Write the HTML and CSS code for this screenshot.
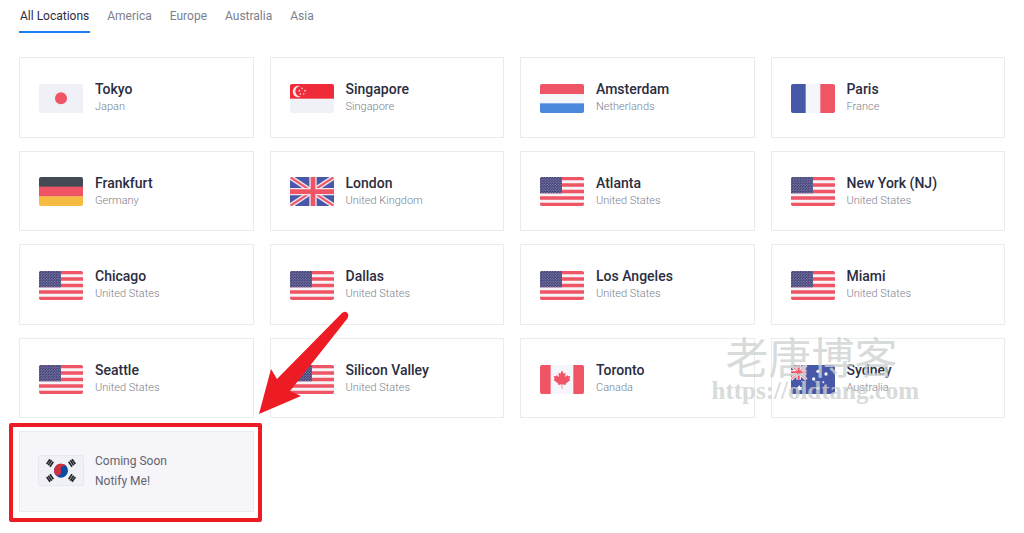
FILE: index.html
```html
<!DOCTYPE html>
<html lang="en">
<head>
    <meta charset="utf-8">
    <title>Server Locations</title>
    <link rel="stylesheet" href="styles.css">
</head>
<body>
    <!-- Flag shapes -->
    <svg class="sprite" aria-hidden="true">
        <symbol id="jp" viewBox="0 0 132 87">
            <rect width="132" height="87" fill="#f0f1f6"/>
            <circle cx="66" cy="43" r="18" fill="#ef5565"/>
        </symbol>
        <symbol id="sg" viewBox="0 0 132 87">
            <rect width="132" height="87" fill="#f0f1f6"/>
            <rect width="132" height="44" fill="#ef2b3a"/>
            <path d="M29 6a17 17 0 1 0 3 32a16 16 0 0 1 0-32z" fill="#fbe4e8"/>
            <g fill="#fbe4e8">
                <circle cx="36" cy="13" r="2.5"/><circle cx="28" cy="20" r="2.5"/><circle cx="45" cy="20" r="2.5"/>
                <circle cx="31" cy="30" r="2.5"/><circle cx="41" cy="30" r="2.5"/>
            </g>
        </symbol>
        <symbol id="nl" viewBox="0 0 132 87">
            <rect width="132" height="87" fill="#f5f6fb"/>
            <rect width="132" height="30" fill="#ef5565"/>
            <rect y="58" width="132" height="29" fill="#4a89dc"/>
        </symbol>
        <symbol id="fr" viewBox="0 0 132 87">
            <rect width="132" height="87" fill="#f5f6fb"/>
            <rect width="44" height="87" fill="#4758a9"/>
            <rect x="88" width="44" height="87" fill="#ef5565"/>
        </symbol>
        <symbol id="de" viewBox="0 0 132 87">
            <rect width="132" height="30" fill="#434a54"/>
            <rect y="29" width="132" height="30" fill="#ef5565"/>
            <rect y="58" width="132" height="29" fill="#f6bb42"/>
        </symbol>
        <symbol id="gb" viewBox="0 0 132 87">
            <rect width="132" height="87" fill="#4758a9"/>
            <path d="M0 0L132 87M132 0L0 87" stroke="#f0dfe8" stroke-width="15"/>
            <path d="M0 0L132 87M132 0L0 87" stroke="#ef5565" stroke-width="6"/>
            <path d="M69 0V87M0 44H132" stroke="#f5e6ec" stroke-width="22"/>
            <path d="M69 0V87M0 44H132" stroke="#ef5565" stroke-width="14"/>
        </symbol>
        <symbol id="us" viewBox="0 0 132 87">
            <pattern id="stars" width="8" height="8" patternUnits="userSpaceOnUse">
                <rect width="8" height="8" fill="#3d3c76"/>
                <circle cx="2" cy="2" r="1.5" fill="#d5d5e6"/>
                <circle cx="6" cy="6" r="1.5" fill="#d5d5e6"/>
            </pattern>
            <rect width="132" height="87" fill="#f7f3f7"/>
            <path d="M0 5H132M0 24H132M0 43.500H132M0 63H132M0 82H132" stroke="#ef5565" stroke-width="10"/>
            <rect width="66" height="49" fill="url(#stars)"/>
        </symbol>
        <symbol id="ca" viewBox="0 0 132 87">
            <rect width="132" height="87" fill="#f5f6fb"/>
            <rect width="32" height="87" fill="#ef5565"/>
            <rect x="100" width="32" height="87" fill="#ef5565"/>
            <path d="M66 16L71 26L77 23L75 37L82 30L84 34L91 33L88 42L91 45L77 56L78 60L67 58V72H65V58L54 60L55 56L41 45L44 42L41 33L48 34L50 30L57 37L55 23L61 26Z" fill="#ef5565"/>
        </symbol>
        <symbol id="au" viewBox="0 0 132 87">
            <rect width="132" height="87" fill="#4758a9"/>
            <path d="M0 0L46 44M46 0L0 44" stroke="#f5e6ec" stroke-width="10"/>
            <path d="M23 0V44M0 22H46" stroke="#f5e6ec" stroke-width="14"/>
            <path d="M0 0L46 44M46 0L0 44" stroke="#ef5565" stroke-width="3"/>
            <path d="M23 0V44M0 22H46" stroke="#ef5565" stroke-width="6"/>
            <g fill="#f5f6fb">
                <path d="M25 60L28 66L35 65L31 70L34 76L27 74L22 79L21 72L15 69L21 66Z"/>
                <circle cx="81" cy="19" r="5"/><circle cx="105" cy="27" r="5"/>
                <circle cx="68" cy="42" r="5"/><circle cx="97" cy="52" r="3"/><circle cx="81" cy="70" r="5"/>
            </g>
        </symbol>
        <symbol id="kr" viewBox="0 0 132 87">
            <rect width="132" height="87" fill="#f0f1f6"/>
            <g transform="rotate(-20 66 44)">
                <circle cx="66" cy="44" r="21" fill="#0a4aa3"/>
                <path d="M45 44a21 21 0 0 1 42 0a10.500 10.500 0 0 0-21 0a10.500 10.500 0 0 1-21 0z" fill="#cf2f3f"/>
            </g>
            <g stroke="#26262b" stroke-width="5">
                <path d="M28 28L38 13M33 32L43 17M23 24L33 10"/>
                <path d="M104 28L94 13M99 32L89 17M109 24L99 10"/>
                <path d="M28 59L38 74M33 55L43 70M23 63L33 77"/>
                <path d="M104 59L94 74M99 55L89 70M109 63L99 77"/>
            </g>
        </symbol>
    </svg>

    <div class="page">
        <nav class="tabs">
            <button type="button" class="tab active">All Locations</button>
            <button type="button" class="tab">America</button>
            <button type="button" class="tab">Europe</button>
            <button type="button" class="tab">Australia</button>
            <button type="button" class="tab">Asia</button>
        </nav>

        <div class="locations">
            <div class="card"><svg class="flag"><use href="#jp"/></svg><div><div class="city">Tokyo</div><div class="country">Japan</div></div></div>
            <div class="card"><svg class="flag"><use href="#sg"/></svg><div><div class="city">Singapore</div><div class="country">Singapore</div></div></div>
            <div class="card"><svg class="flag"><use href="#nl"/></svg><div><div class="city">Amsterdam</div><div class="country">Netherlands</div></div></div>
            <div class="card"><svg class="flag"><use href="#fr"/></svg><div><div class="city">Paris</div><div class="country">France</div></div></div>

            <div class="card"><svg class="flag"><use href="#de"/></svg><div><div class="city">Frankfurt</div><div class="country">Germany</div></div></div>
            <div class="card"><svg class="flag"><use href="#gb"/></svg><div><div class="city">London</div><div class="country">United Kingdom</div></div></div>
            <div class="card"><svg class="flag"><use href="#us"/></svg><div><div class="city">Atlanta</div><div class="country">United States</div></div></div>
            <div class="card"><svg class="flag"><use href="#us"/></svg><div><div class="city">New York (NJ)</div><div class="country">United States</div></div></div>

            <div class="card"><svg class="flag"><use href="#us"/></svg><div><div class="city">Chicago</div><div class="country">United States</div></div></div>
            <div class="card"><svg class="flag"><use href="#us"/></svg><div><div class="city">Dallas</div><div class="country">United States</div></div></div>
            <div class="card"><svg class="flag"><use href="#us"/></svg><div><div class="city">Los Angeles</div><div class="country">United States</div></div></div>
            <div class="card"><svg class="flag"><use href="#us"/></svg><div><div class="city">Miami</div><div class="country">United States</div></div></div>

            <div class="card"><svg class="flag"><use href="#us"/></svg><div><div class="city">Seattle</div><div class="country">United States</div></div></div>
            <div class="card"><svg class="flag"><use href="#us"/></svg><div><div class="city">Silicon Valley</div><div class="country">United States</div></div></div>
            <div class="card"><svg class="flag"><use href="#ca"/></svg><div><div class="city">Toronto</div><div class="country">Canada</div></div></div>
            <div class="card">
                <svg class="flag"><use href="#au"/></svg><div><div class="city">Sydney</div><div class="country">Australia</div></div>
                <div class="watermark">
                    <div class="watermark-name">老唐博客</div>
                    <div class="watermark-url">https://oldtang.com</div>
                </div>
            </div>

            <div class="card soon">
                <svg class="flag"><use href="#kr"/></svg>
                <div class="notify">Coming Soon<br><a href="#">Notify Me!</a></div>
                <svg class="arrow" viewBox="0 0 92 104" aria-hidden="true">
                    <path d="M1 103L13 58L19 68L84 2Q88-1 90 3Q91 5 89 8L32 80L43 85Z" fill="#ed1c24"/>
                </svg>
            </div>
        </div>
    </div>
</body>
</html>
```
FILE: styles.css
```css
* {
    box-sizing: border-box;
}

body {
    margin: 0;
    font-family: Roboto, Arial, sans-serif;
    background-color: #fff;
    color: #2b2d42;
}

.sprite {
    position: absolute;
    width: 0;
    height: 0;
}

.page {
    padding: 0 19px 21px;
}

.tabs {
    display: flex;
    gap: 16px;
    margin-bottom: 24px;
}

.tab {
    padding: 8px 1px 7px;
    border: none;
    border-bottom: 2px solid transparent;
    background: none;
    font-family: inherit;
    font-size: 12px;
    line-height: 16px;
    color: #7d808c;
    cursor: pointer;
}

.tab.active {
    color: #2b2d42;
    border-bottom-color: #1a7df0;
}

.locations {
    display: grid;
    grid-template-columns: repeat(4, 1fr);
    grid-auto-rows: 1fr;
    gap: 13px 16px;
    min-height: 455px;
}

.card {
    position: relative;
    display: flex;
    align-items: center;
    gap: 12px;
    padding: 20px 19px 18px;
    border: 1px solid #ebebee;
}

.flag {
    flex: none;
    width: 44px;
    height: 29px;
    border-radius: 2px;
}

.city {
    font-size: 14px;
    font-weight: 500;
    line-height: 18px;
}

.country {
    font-size: 11px;
    font-weight: 300;
    line-height: 18px;
    color: #7d808c;
}

.soon {
    padding: 17px 18px 19px;
    gap: 11px;
    background-color: #f5f5fa;
}

.soon .flag {
    width: 46px;
    height: 31px;
    border: 1px solid #e8e9ee;
}

.notify {
    font-size: 12px;
    line-height: 20px;
    color: #62646f;
}

.notify a {
    color: inherit;
    text-decoration: none;
}

/* red marker around the last card */
.soon::after {
    content: "";
    position: absolute;
    inset: -9px -9px -11px -11px;
    border: 4px solid #ed1c24;
    border-radius: 2px;
}

.arrow {
    position: absolute;
    right: -97px;
    bottom: 96px;
    width: 92px;
    height: 104px;
}

.watermark {
    position: absolute;
    left: -60px;
    top: -8px;
    color: rgba(205, 209, 208, 0.8);
    white-space: nowrap;
    pointer-events: none;
}

.watermark-name {
    padding-left: 14px;
    font-family: "Noto Sans CJK SC", sans-serif;
    font-size: 43px;
    line-height: 48px;
}

.watermark-url {
    font-family: "Liberation Serif", serif;
    font-size: 25px;
    font-weight: bold;
    line-height: 24px;
}
```
